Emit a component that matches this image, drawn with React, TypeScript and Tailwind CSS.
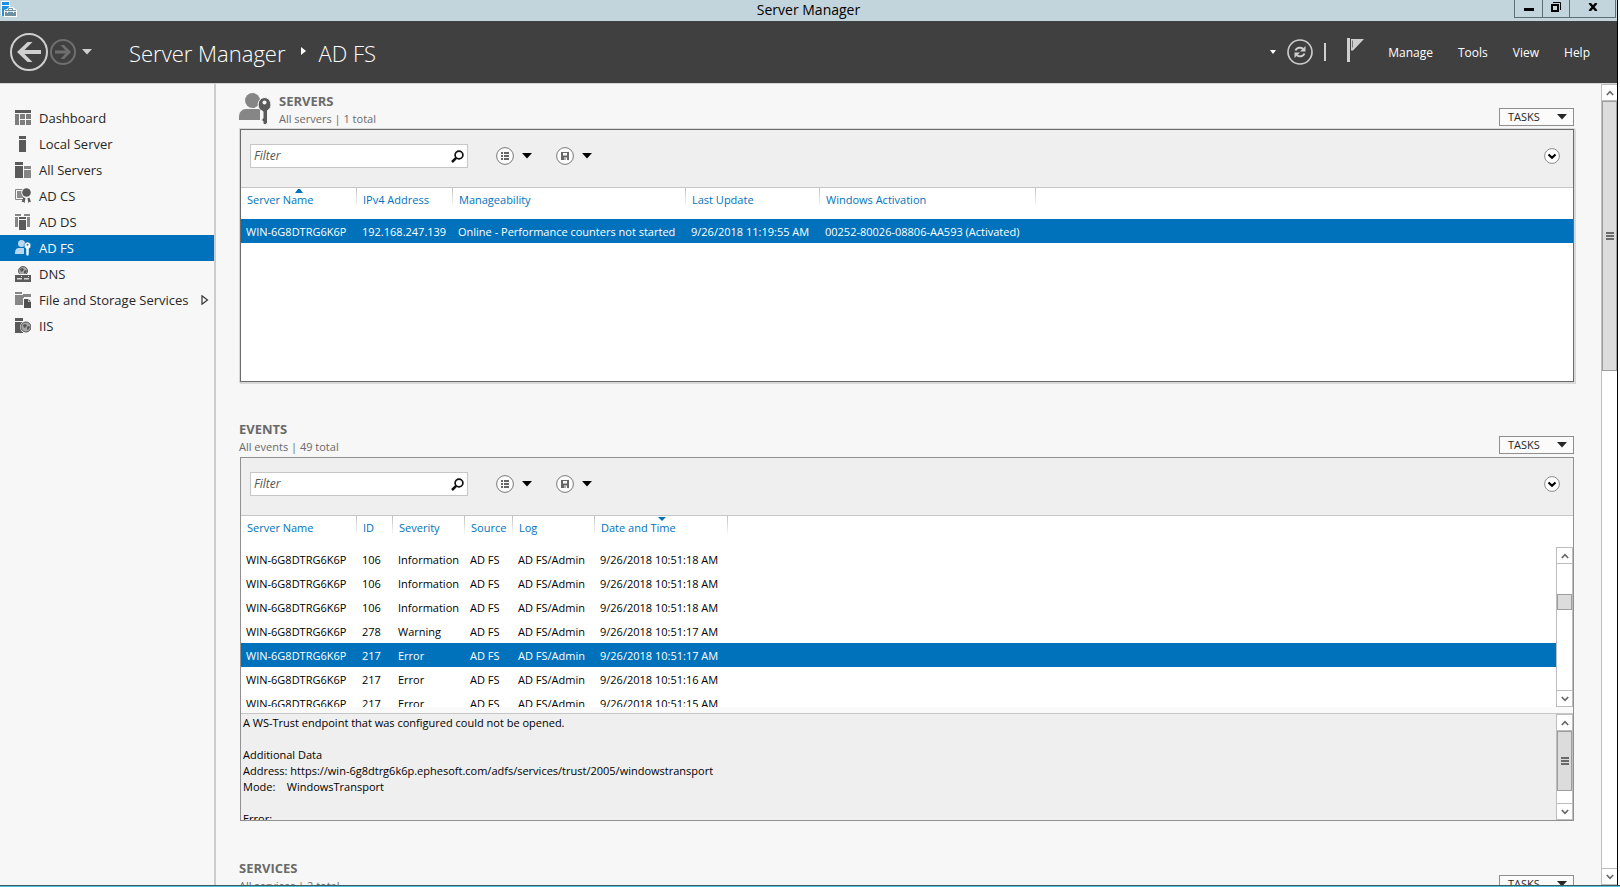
import { ReactNode } from "react";

type Column = {
  name: string;
  width: string;
  sort?: "up" | "down";
};

const serverColumns: Column[] = [
  { name: "Server Name", width: "w-[116px]", sort: "up" },
  { name: "IPv4 Address", width: "w-[96px]" },
  { name: "Manageability", width: "w-[233px]" },
  { name: "Last Update", width: "w-[134px]" },
  { name: "Windows Activation", width: "w-[216px]" },
];

const serverRows = [
  [
    "WIN-6G8DTRG6K6P",
    "192.168.247.139",
    "Online - Performance counters not started",
    "9/26/2018 11:19:55 AM",
    "00252-80026-08806-AA593 (Activated)",
  ],
];

const eventColumns: Column[] = [
  { name: "Server Name", width: "w-[116px]" },
  { name: "ID", width: "w-[36px]" },
  { name: "Severity", width: "w-[72px]" },
  { name: "Source", width: "w-[48px]" },
  { name: "Log", width: "w-[82px]" },
  { name: "Date and Time", width: "w-[133px]", sort: "down" },
];

const eventRows = [
  ["WIN-6G8DTRG6K6P", "106", "Information", "AD FS", "AD FS/Admin", "9/26/2018 10:51:18 AM"],
  ["WIN-6G8DTRG6K6P", "106", "Information", "AD FS", "AD FS/Admin", "9/26/2018 10:51:18 AM"],
  ["WIN-6G8DTRG6K6P", "106", "Information", "AD FS", "AD FS/Admin", "9/26/2018 10:51:18 AM"],
  ["WIN-6G8DTRG6K6P", "278", "Warning", "AD FS", "AD FS/Admin", "9/26/2018 10:51:17 AM"],
  ["WIN-6G8DTRG6K6P", "217", "Error", "AD FS", "AD FS/Admin", "9/26/2018 10:51:17 AM"],
  ["WIN-6G8DTRG6K6P", "217", "Error", "AD FS", "AD FS/Admin", "9/26/2018 10:51:16 AM"],
  ["WIN-6G8DTRG6K6P", "217", "Error", "AD FS", "AD FS/Admin", "9/26/2018 10:51:15 AM"],
];

const eventDetail = `A WS-Trust endpoint that was configured could not be opened.

Additional Data
Address: https://win-6g8dtrg6k6p.ephesoft.com/adfs/services/trust/2005/windowstransport
Mode:    WindowsTransport

Error:`;

const Globe = ({ cx, cy, r }: { cx: number; cy: number; r: number }) => (
  <g>
    <circle cx={cx} cy={cy} r={r} fill="#f7f7f7" />
    <circle cx={cx} cy={cy} r={r - 1} fill="#a6a6a6" stroke="#5a5a5a" />
    <path
      d={`M${cx - 3} ${cy - 2}l2-1 2 1-1 2-2 1zM${cx + 1} ${cy}l2-1 1 1-2 3-1-1z`}
      fill="#555"
    />
  </g>
);

const menuItems: { name: string; icon: ReactNode; more?: boolean }[] = [
  {
    name: "Dashboard",
    icon: (
      <>
        <path d="M0 0h16v3H0z" fill="#5a5a5a" />
        <path d="M0 4h4v11H0zM5 4h5v5H5zM11 4h5v5h-5zM5 10h5v5H5zM11 10h5v5h-5z" fill="#7d7d7d" />
      </>
    ),
  },
  {
    name: "Local Server",
    icon: <path d="M4 0h7v3H4zM4 4h7v12H4z" fill="#5a5a5a" />,
  },
  {
    name: "All Servers",
    icon: (
      <>
        <path d="M0 0h8v3H0zM0 4h8v12H0z" fill="#5a5a5a" />
        <path d="M9 4h7v3H9zM9 8h7v8H9z" fill="#868686" />
      </>
    ),
  },
  {
    name: "AD CS",
    icon: (
      <>
        <path d="M.5 1.500h8v10h-8z" fill="#f7f7f7" stroke="#868686" />
        <path d="M2 3h6v7H2z" fill="#8c8c8c" />
        <circle cx="11.500" cy="4.500" r="5.200" fill="#f7f7f7" />
        <circle cx="11.500" cy="4.500" r="4.300" fill="#5a5a5a" />
        <path d="M8.500 9.500l2 .8-1 5-1.200-1.500-1.800.4zM12.500 10.300l2-.8 1.500 4.700-1.500-.4-1 1.500z" fill="#5a5a5a" />
      </>
    ),
  },
  {
    name: "AD DS",
    icon: (
      <>
        <path d="M0 0h6v2H0zM0 3h3v10H0zM9 0h6v2H9zM12 3h3v10h-3z" fill="#868686" />
        <path d="M4 3h7v2H4zM4 6h7v10H4z" fill="#5a5a5a" />
      </>
    ),
  },
  {
    name: "AD FS",
    icon: (
      <>
        <circle cx="6.500" cy="3.500" r="3.500" fill="#b9d8ef" />
        <path d="M0 14c0-4 1-6 4-6h5v6z" fill="#b9d8ef" />
        <path
          d="M12.500 2a3.500 3.500 0 0 1 1.500 6.600V15l-1.500 1L11 15V8.600A3.500 3.500 0 0 1 12.500 2z"
          fill="#fff"
          stroke="#0072bc"
          strokeWidth=".6"
        />
        <circle cx="12.500" cy="4.800" r="1" fill="#0072bc" />
      </>
    ),
  },
  {
    name: "DNS",
    icon: (
      <>
        <Globe cx={8} cy={5} r={5.5} />
        <path d="M0 9h16v7H0z" fill="#5a5a5a" />
        <path d="M0 8.500h16" stroke="#f7f7f7" />
        <path d="M2 12h5v1.500H2zM9 12h5v1.500H9zM6 10h1v1H6zM13 10h1v1h-1z" fill="#d8d8d8" />
      </>
    ),
  },
  {
    name: "File and Storage Services",
    more: true,
    icon: (
      <>
        <path d="M0 0h7v2H0zM0 3h16v2H9v8H0zM8 2h8v2H8z" fill="#868686" />
        <path d="M8 6h5l4 4v7H8z" fill="#f7f7f7" />
        <path d="M9 7h4v3h3v6H9z" fill="#4f4f4f" />
        <path d="M13.500 7v2.500H16z" fill="#4f4f4f" />
      </>
    ),
  },
  {
    name: "IIS",
    icon: (
      <>
        <path d="M0 0h8v3H0zM0 4h8v11H0z" fill="#5a5a5a" />
        <Globe cx={11} cy={9} r={6} />
      </>
    ),
  },
];

const Caret = ({ className = "" }: { className?: string }) => (
  <svg viewBox="0 0 10 6" className={`w-[10px] h-[6px] ${className}`} fill="currentColor">
    <path d="M0 0h10L5 5.500z" />
  </svg>
);

const Chevron = ({ up }: { up?: boolean }) => (
  <svg viewBox="0 0 8 6" className="w-2 h-1.5" fill="none" stroke="#666" strokeWidth="1.600">
    <path d={up ? "M.8 5L4 1.600 7.200 5" : "M.8 1L4 4.400 7.200 1"} />
  </svg>
);

const Scrollbar = ({
  thumb,
  grip,
  className = "w-[17px] border-x",
}: {
  thumb: string;
  grip?: boolean;
  className?: string;
}) => (
  <div className={`flex flex-col shrink-0 bg-white border-[#bdbdbd] ${className}`}>
    <button
      aria-label="Scroll up"
      className="flex items-center justify-center h-[17px] shrink-0 border-y border-[#bdbdbd]"
    >
      <Chevron up />
    </button>
    <div className="flex-1 min-h-0">
      <div
        className={`flex flex-col items-center justify-center gap-px bg-[#dcdcdc] border border-[#9d9d9d] ${thumb}`}
      >
        {grip &&
          [0, 1, 2].map((i) => <span key={i} className="block w-2 h-0.5 bg-[#6a6a6a]" />)}
      </div>
    </div>
    <button
      aria-label="Scroll down"
      className="flex items-center justify-center h-[17px] shrink-0 border-y border-[#bdbdbd]"
    >
      <Chevron />
    </button>
  </div>
);

const TitleBar = () => (
  <div className="grid grid-cols-[1fr_auto_1fr] h-[21px] shrink-0 bg-[#c3d5dc]">
    <svg viewBox="0 0 16 16" className="w-4 h-4 mt-px ml-px">
      <path d="M0 0h9v15H0z" fill="#fff" />
      <path d="M1 1h7v3H1zM1 5h7v10H1z" fill="#1f8fe0" />
      <path d="M3 9l3-1 2-2h4l2 2 2 1v7H3z" fill="#fff" />
      <path d="M4 9h11v6H4z" fill="#6f8fa5" />
      <path d="M7.500 9V7.500h4V9" fill="none" stroke="#6f8fa5" />
      <path d="M4 10.500h11M6.500 10v2M12.500 10v2" stroke="#fff" strokeWidth=".8" />
    </svg>
    <h1 className="text-sm leading-[19px] text-black">Server Manager</h1>
    <div className="flex justify-end h-[18px] pr-px">
      <button
        aria-label="Minimize"
        className="flex items-end justify-center w-[29px] pb-1.5 border border-t-0 border-[#5f6d75]"
      >
        <span className="block w-[10px] h-[3px] bg-black" />
      </button>
      <button
        aria-label="Restore"
        className="flex items-center justify-center w-[26px] border-b border-[#5f6d75]"
      >
        <svg viewBox="0 0 10 10" className="w-[10px] h-[10px] mb-1" fill="none" stroke="#000">
          <path d="M1 3h6v6H1z" strokeWidth="2" />
          <path d="M2 .5h7.500V8" />
        </svg>
      </button>
      <button
        aria-label="Close"
        className="flex items-center justify-center w-[47px] border border-t-0 border-[#5f6d75]"
      >
        <svg viewBox="0 0 10 8" className="w-[10px] h-2 mb-1" fill="none" stroke="#000" strokeWidth="2.400">
          <path d="M1.500 0l7 8M8.500 0l-7 8" />
        </svg>
      </button>
    </div>
  </div>
);

const Header = () => (
  <header className="flex items-center h-[62px] shrink-0 pl-[10px] pr-[27px] bg-[#404040] text-white">
    <button aria-label="Back">
      <svg viewBox="0 0 38 38" className="w-[38px] h-[38px]" fill="none" stroke="#cfcfcf">
        <circle cx="19" cy="19" r="18" strokeWidth="2" />
        <path d="M31 19H10" strokeWidth="4" />
        <path d="M22.500 9h-5L7 19l10.500 10h5L12.500 19z" fill="#cfcfcf" stroke="none" />
      </svg>
    </button>
    <button aria-label="Forward" className="ml-0.5">
      <svg viewBox="0 0 26 26" className="w-[26px] h-[26px]" fill="none" stroke="#6f6f6f">
        <circle cx="13" cy="13" r="12" strokeWidth="2" />
        <path d="M5 13h14" strokeWidth="3" />
        <path d="M10.500 6H14l7 7-7 7h-3.500l6.500-7z" fill="#6f6f6f" stroke="none" />
      </svg>
    </button>
    <button aria-label="History" className="ml-1.5">
      <Caret className="text-[#cfcfcf]" />
    </button>
    <nav className="flex items-center ml-[37px] pt-0.5 text-[22px] leading-[30px] font-light">
      <a href="#manager">Server Manager</a>
      <svg viewBox="0 0 5 8" className="w-[5px] h-2 ml-4 mr-3 mb-1" fill="#fff">
        <path d="M0 0l5 4-5 4z" />
      </svg>
      <a href="#adfs">AD FS</a>
    </nav>
    <div className="flex items-center ml-auto">
      <button aria-label="Notifications list">
        <svg viewBox="0 0 6 4" className="w-1.5 h-1" fill="#fff">
          <path d="M0 0h6L3 4z" />
        </svg>
      </button>
      <button aria-label="Refresh" className="ml-[11px]">
        <svg viewBox="0 0 26 26" className="w-[26px] h-[26px]" fill="none" stroke="#cfcfcf">
          <circle cx="13" cy="13" r="12" strokeWidth="1.600" />
          <path d="M8.500 11.500c1-2.800 5-3.800 7.500-1.800M17.500 14.500c-1 2.800-5 3.800-7.500 1.800" strokeWidth="2" />
          <path d="M18.500 7v5.500H13zM7.500 19v-5.500H13z" fill="#cfcfcf" stroke="none" />
        </svg>
      </button>
      <span className="block w-0.5 h-[18px] ml-[11px] bg-[#cfcfcf]" />
      <button aria-label="Notifications" className="ml-[21px] mb-1">
        <svg viewBox="0 0 17 24" className="w-[17px] h-6" fill="#cfcfcf">
          <path d="M0 0h3v24H0zM4 1h13L6 12.500H4z" />
          <path d="M5.500 2.500v7" stroke="#777" strokeWidth="1" />
        </svg>
      </button>
      <div className="flex gap-[25px] pt-px ml-6 text-xs font-medium">
        {["Manage", "Tools", "View", "Help"].map((name) => (
          <button key={name}>{name}</button>
        ))}
      </div>
    </div>
  </header>
);

const Sidebar = () => (
  <nav className="w-[216px] shrink-0 pt-[21px] border-r-2 border-[#cdcdcd] bg-[#f7f7f7]">
    {menuItems.map((item) => (
      <a
        key={item.name}
        href={`#${item.name}`}
        className={`flex items-center h-[26px] pl-[15px] pr-[5px] pb-px text-[13px] ${
          item.name === "AD FS" ? "bg-[#0072bc] text-white" : "text-[#262626]"
        }`}
      >
        <svg viewBox="0 0 16 16" className="w-4 h-4 mr-2 shrink-0">
          {item.icon}
        </svg>
        <span className="pt-0.5">{item.name}</span>
        {item.more && (
          <svg viewBox="0 0 8 10" className="w-2 h-[10px] ml-auto" fill="none" stroke="#333">
            <path d="M1 .8v8.400L6.500 5z" strokeWidth="1.200" />
          </svg>
        )}
      </a>
    ))}
  </nav>
);

const SectionHeader = ({ title, total, icon }: { title: string; total: string; icon?: ReactNode }) => (
  <div className="flex items-end h-[45px] shrink-0 -ml-px">
    {icon}
    <div className="pb-px text-[#6a6a6a]">
      <h2 className="text-[13px] leading-[18px] font-bold">{title}</h2>
      <p className="text-[11px] leading-[18px]">{total}</p>
    </div>
    <button className="flex items-center justify-between w-[75px] h-[18px] ml-auto mb-[3px] pl-2 pr-1.5 border border-[#8f8f8f] bg-[#fbfbfb] text-[11px] text-[#262626]">
      TASKS
      <Caret />
    </button>
  </div>
);

const Toolbar = ({ id }: { id: string }) => (
  <div className="flex items-center h-[58px] shrink-0 pl-[9px] pr-[13px] pb-[5px] border-b border-[#c6c6c6] bg-[#efefef]">
    <div className="flex items-center w-[218px] h-6 pr-[3px] border border-[#c6c6c6] bg-white">
      <label htmlFor={id} className="sr-only">
        Filter
      </label>
      <input
        id={id}
        type="text"
        placeholder="Filter"
        className="flex-1 min-w-0 h-[22px] pl-[3px] text-xs leading-[22px] italic outline-none placeholder:text-[#555]"
      />
      <svg viewBox="0 0 13 13" className="w-[13px] h-[13px]" fill="none" stroke="#111">
        <circle cx="8" cy="5" r="3.900" strokeWidth="1.700" />
        <path d="M5.200 7.800L1 12" strokeWidth="2.500" />
      </svg>
    </div>
    <button aria-label="Saved queries" className="flex items-center gap-2 ml-7">
      <svg viewBox="0 0 18 18" className="w-[18px] h-[18px]">
        <circle cx="9" cy="9" r="8.400" fill="#fbfbfb" stroke="#7a7a7a" />
        <path d="M5 5h2v2H5zM5 8h2v2H5zM5 11h2v2H5zM8 5h5v2H8zM8 8h5v2H8zM8 11h5v2H8z" fill="#666" />
      </svg>
      <Caret />
    </button>
    <button aria-label="Save query" className="flex items-center gap-2 ml-6">
      <svg viewBox="0 0 18 18" className="w-[18px] h-[18px]">
        <circle cx="9" cy="9" r="8.400" fill="#fbfbfb" stroke="#7a7a7a" />
        <path d="M5 5h8v8H5z" fill="#666" />
        <path d="M7 6h4v2.500H7zM8 10.500h3V13H8z" fill="#fbfbfb" />
        <path d="M8.500 11h1v2h-1z" fill="#666" />
      </svg>
      <Caret />
    </button>
    <button aria-label="Expand" className="ml-auto">
      <svg viewBox="0 0 16 16" className="w-4 h-4" fill="none">
        <circle cx="8" cy="8" r="7.400" fill="#fff" stroke="#8a8a8a" />
        <path d="M4.500 6.500L8 9.700l3.500-3.200" stroke="#000" strokeWidth="2.200" />
      </svg>
    </button>
  </div>
);

const DataTable = ({
  columns,
  rows,
  selected,
}: {
  columns: Column[];
  rows: string[][];
  selected: number;
}) => (
  <table className="w-full table-fixed text-left text-[11px] leading-4 whitespace-nowrap">
    <thead>
      <tr className="h-[31px] align-top">
        {columns.map((col) => (
          <th
            key={col.name}
            className={`relative pl-1.5 pt-1 font-normal text-[#0072bc] bg-linear-to-b from-[#c0c0c0] to-white bg-[length:1px_20px] bg-right-top bg-no-repeat ${col.width}`}
          >
            {col.name}
            {col.sort && (
              <svg
                viewBox="0 0 8 4"
                className="absolute top-px left-1/2 w-2 h-1 -translate-x-1/2"
                fill="#0072bc"
              >
                <path d={col.sort === "up" ? "M0 4l3-4h2l3 4z" : "M0 0h8L4 4z"} />
              </svg>
            )}
          </th>
        ))}
        <th aria-label="Filler" />
      </tr>
    </thead>
    <tbody>
      {rows.map((row, index) => (
        <tr
          key={index}
          className={`h-6 ${index === selected ? "bg-[#0072bc] text-white" : "text-black"}`}
        >
          {row.map((cell, i) => (
            <td key={i} className="p-0 pl-[5px] pt-0.5">
              {cell}
            </td>
          ))}
          <td />
        </tr>
      ))}
    </tbody>
  </table>
);

const ServersIcon = () => (
  <svg viewBox="0 0 32 32" className="w-8 h-8 mr-2 mb-1 shrink-0">
    <circle cx="13.500" cy="7.500" r="7.500" fill="#868686" />
    <path d="M0 27v-3c0-5 3-8 7-8h14v11z" fill="#868686" />
    <path
      d="M25 4.500a7 7 0 0 1 3.500 13V30L26 32l-2-1.500v-2l-1.500-1.500 1.500-2v-6.500A7.300 7.300 0 0 1 25 4.500z"
      fill="#5a5a5a"
      stroke="#f7f7f7"
    />
    <circle cx="25.500" cy="9.500" r="2" fill="#f7f7f7" />
  </svg>
);

export default function App() {
  return (
    <div className="flex flex-col h-screen overflow-hidden bg-white font-['Open_Sans','Noto_Sans',sans-serif]">
      <div className="flex flex-col flex-1 min-h-0 mr-0.5 border-r border-black">
        <TitleBar />
        <Header />
        <div className="flex flex-1 min-h-0 border-t border-[#d5d5d5]">
          <Sidebar />
          <main className="flex flex-col flex-1 min-w-0 pl-6 pr-[27px] overflow-hidden bg-[#f7f7f7]">
            <SectionHeader title="SERVERS" total="All servers | 1 total" icon={<ServersIcon />} />
            <section className="h-[253px] shrink-0 mb-[30px] border border-[#6b6b6b] bg-white shadow-[0_0_0_1px_#d8d8d8,1px_1px_0_1px_#d8d8d8]">
              <Toolbar id="servers-filter" />
              <DataTable columns={serverColumns} rows={serverRows} selected={0} />
            </section>

            <SectionHeader title="EVENTS" total="All events | 49 total" />
            <section className="shrink-0 mb-[30px] border border-[#919191] bg-white">
              <Toolbar id="events-filter" />
              <div className="flex h-[191px] overflow-hidden">
                <div className="flex-1 min-w-0">
                  <DataTable columns={eventColumns} rows={eventRows} selected={4} />
                </div>
                <div className="flex pt-[31px]">
                  <Scrollbar thumb="h-4 mt-[30px]" />
                </div>
              </div>
              <div className="h-[7px] border-b border-[#c6c6c6] bg-[#fafafa]" />
              <div className="flex h-[106px] overflow-hidden bg-[#efefef]">
                <p className="flex-1 pt-px pl-0.5 text-[11px] leading-4 text-black whitespace-pre-wrap">
                  {eventDetail}
                </p>
                <Scrollbar thumb="h-[60px]" grip />
              </div>
            </section>

            <SectionHeader title="SERVICES" total="All services | 2 total" />
          </main>
          <Scrollbar thumb="h-[270px]" grip className="w-4 border-l" />
        </div>
      </div>
      <div className="h-0.5 shrink-0 border-t border-[#3f5a60] bg-[#4fc3dc]" />
    </div>
  );
}
